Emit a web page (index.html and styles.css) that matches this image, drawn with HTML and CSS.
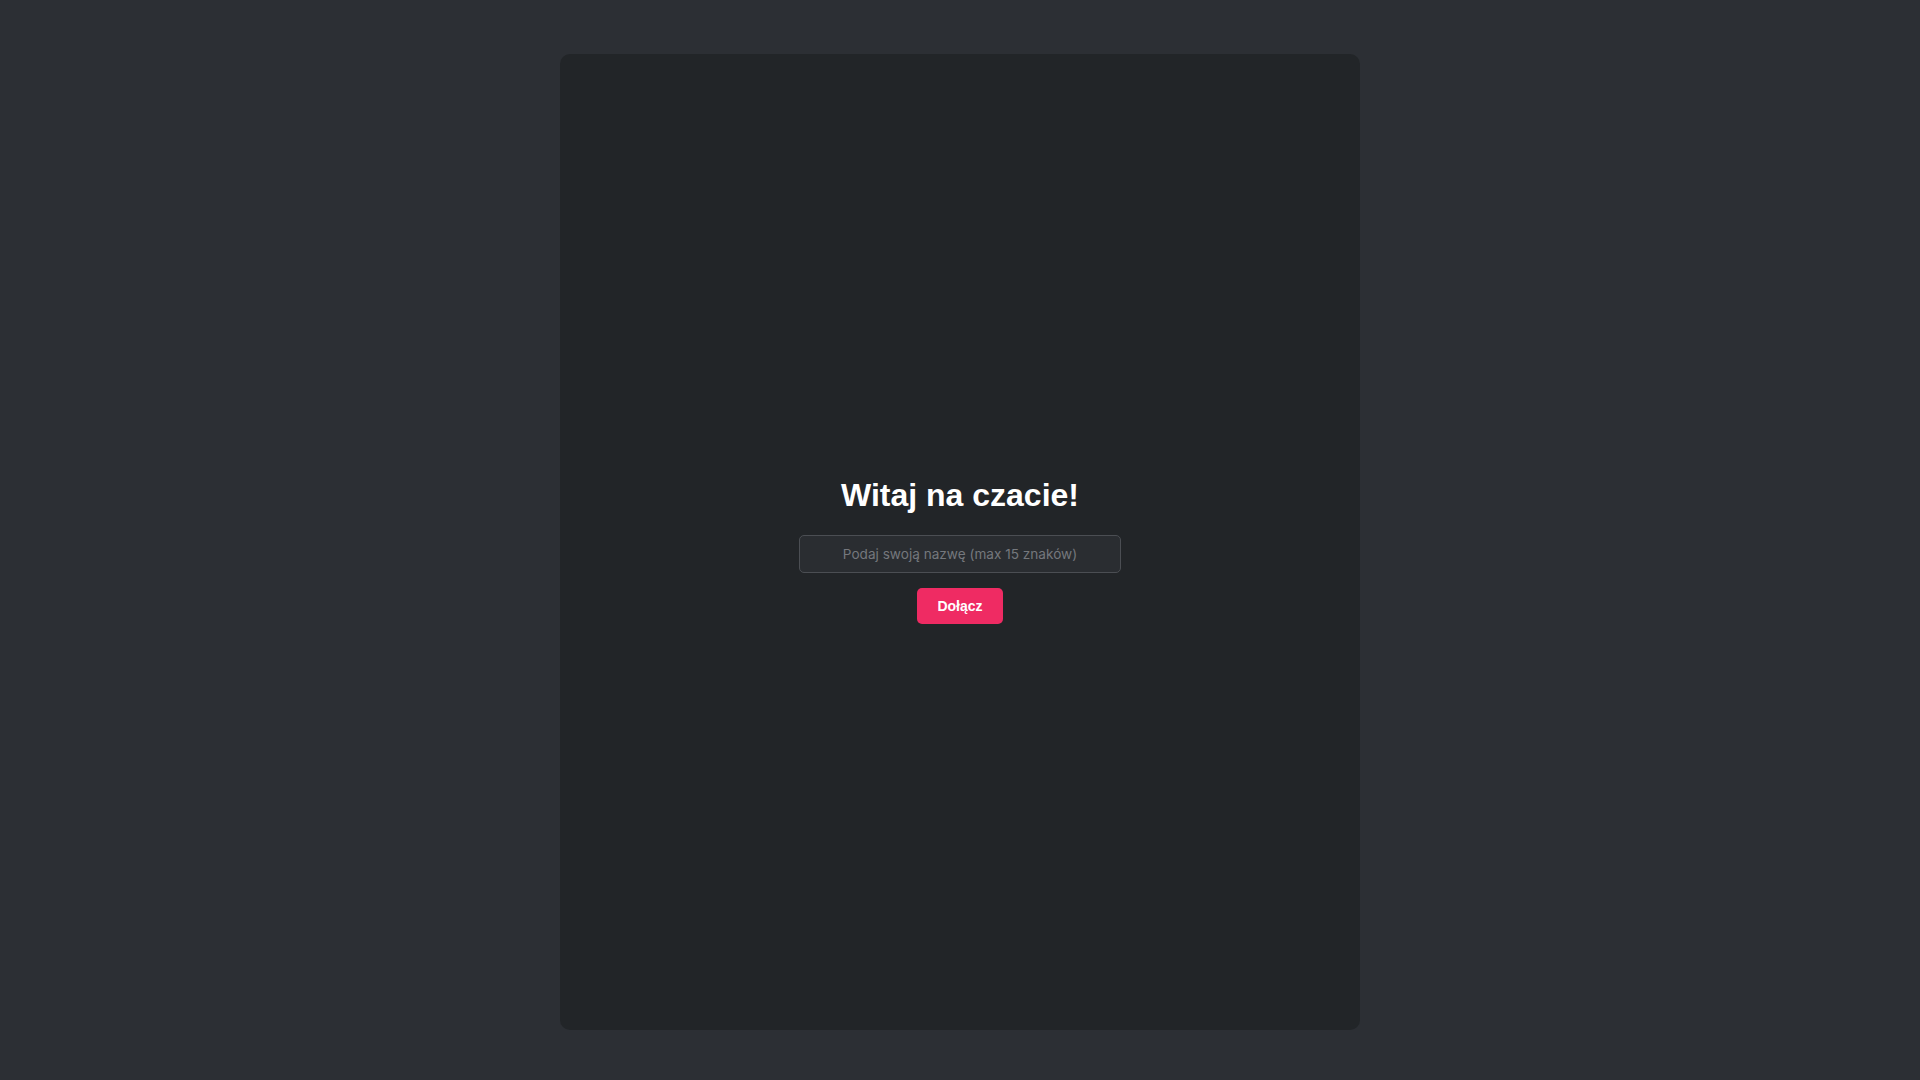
FILE: index.html
```html
<!DOCTYPE html>
<html lang="pl">
<head>
<meta charset="utf-8">
<title>Czat</title>
<link rel="stylesheet" href="styles.css">
</head>
<body>
<div class="page">
  <main class="card">
    <h1 class="title">Witaj na czacie!</h1>
    <input class="name-input" type="text" placeholder="Podaj swoją nazwę (max 15 znaków)" maxlength="15">
    <button class="join-btn">Dołącz</button>
  </main>
</div>
</body>
</html>
```

FILE: styles.css
```css
html, body {
  margin: 0;
  padding: 0;
  height: 100%;
}
body {
  background: #2c2f34;
  font-family: "Liberation Sans", Arial, sans-serif;
  color: #ffffff;
}
.page {
  height: 100vh;
  box-sizing: border-box;
  padding-top: 54px;
  display: flex;
  align-items: flex-start;
  justify-content: center;
}
.card {
  width: 800px;
  height: 976px;
  padding-bottom: 4px;
  background: #222528;
  border-radius: 10px;
  display: flex;
  flex-direction: column;
  align-items: center;
  justify-content: center;
  box-sizing: border-box;
}
.title {
  font-size: 32px;
  font-weight: bold;
  margin: 0.67em 0;
  color: #ffffff;
}
.name-input {
  width: 322px;
  height: 38px;
  box-sizing: border-box;
  background: #2a2d31;
  border: 1px solid #4b4e53;
  border-radius: 5px;
  color: #ffffff;
  font-family: Inter, "Noto Sans", sans-serif;
  font-size: 13.6px;
  text-align: center;
  padding: 0 10px;
  margin: 0 0 15px;
  outline: none;
}
.name-input::placeholder {
  color: #75787d;
}
.join-btn {
  height: 36px;
  padding: 0 20.5px;
  background: #ef2b63;
  color: #ffffff;
  border: none;
  border-radius: 5px;
  font-family: "Liberation Sans", Arial, sans-serif;
  font-size: 14px;
  font-weight: bold;
  cursor: pointer;
}
```
